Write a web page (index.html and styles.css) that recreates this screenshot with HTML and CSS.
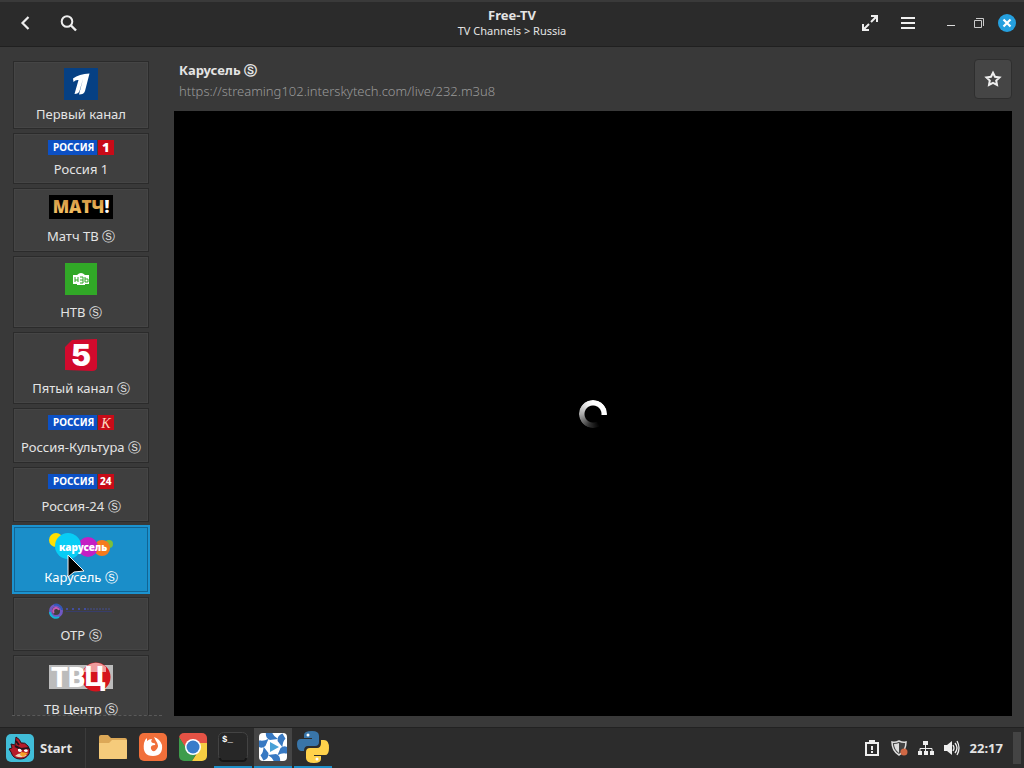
FILE: index.html
```html
<!DOCTYPE html>
<html lang="en">
<head>
<meta charset="utf-8">
<meta name="viewport" content="width=device-width, initial-scale=1">
<title>Free-TV</title>
<link rel="stylesheet" href="styles.css">
</head>
<body>
<header class="titlebar">
  <div class="titlebar-side titlebar-start">
    <button class="icon-button" aria-label="Back"><svg width="20" height="20" viewBox="0 0 20 20"><path d="M13.500 4 7.500 10l6 6" fill="none" stroke="#eee" stroke-width="2.2"/></svg></button>
    <button class="icon-button" aria-label="Search"><svg width="20" height="20" viewBox="0 0 20 20"><circle cx="9" cy="8.500" r="5.300" fill="none" stroke="#eee" stroke-width="2"/><path d="m13 12.500 5 5" stroke="#eee" stroke-width="2.400"/></svg></button>
  </div>
  <div class="titles">
    <h1 class="title">Free-TV</h1>
    <p class="subtitle">TV Channels &gt; Russia</p>
  </div>
  <div class="titlebar-side titlebar-end">
    <button class="icon-button" aria-label="Fullscreen"><svg width="20" height="20" viewBox="0 0 20 20"><path d="M11 3h6v6M9 17H3v-6M17 3l-6 6M3 17l6-6" fill="none" stroke="#eee" stroke-width="2"/><path d="M12 2h6v6zM2 12v6h6z" fill="#eee"/></svg></button>
    <button class="icon-button" aria-label="Menu"><svg width="20" height="20" viewBox="0 0 20 20"><path d="M3 5h14M3 10h14M3 15h14" stroke="#f0f0f0" stroke-width="2"/></svg></button>
    <div class="window-controls">
      <button class="window-button" aria-label="Minimize"><svg width="18" height="18" viewBox="0 0 18 18"><path d="M5 11.500h8" stroke="#ddd"/></svg></button>
      <button class="window-button" aria-label="Restore"><svg width="18" height="18" viewBox="0 0 18 18"><path d="M4.500 6.500h7v7h-7zM6 4.500h7.500V12" fill="none" stroke="#ccc"/></svg></button>
      <button class="window-button" aria-label="Close"><svg width="18" height="18" viewBox="0 0 18 18"><circle cx="9" cy="9" r="9" fill="#25a0df"/><path d="m5.500 5.500 7 7m0-7-7 7" stroke="#fff" stroke-width="2.200"/></svg></button>
    </div>
  </div>
</header>

<main class="content">
  <nav class="channels" aria-label="Channels">
    <button class="channel">
      <svg width="34" height="32" viewBox="0 0 34 32"><path fill="#064083" d="M0 0h34v32H0z"/><path d="M9 10.500Q15 6 25.500 5.500L21 23q-1 3.500-6 3.500L19 11l-3.500 12q-1 3-5 3L14.500 12q-3-.5-5 2z" fill="#fff"/></svg>
      <span class="label">Первый канал</span>
    </button>
    <button class="channel">
      <svg width="66" height="15" viewBox="0 0 66 15"><path fill="#0c50c4" d="M0 0h49v15H0z"/><path fill="#c80b18" d="M50 0h16v15H50z"/><text class="logo-text" x="5" y="11">РОССИЯ</text><text class="logo-digit" x="54" y="12">1</text></svg>
      <span class="label">Россия 1</span>
    </button>
    <button class="channel">
      <svg width="64" height="24" viewBox="0 0 64 24"><defs><linearGradient id="gold" x2="0" y2="1"><stop stop-color="#c98b38"/><stop offset="1" stop-color="#ffce70"/></linearGradient></defs><path d="M0 0h64v24H0z"/><text class="logo-match" x="32" y="18">МАТЧ<tspan fill="#fff">!</tspan></text></svg>
      <span class="label label-tall">Матч ТВ Ⓢ</span>
    </button>
    <button class="channel">
      <svg width="32" height="32" viewBox="0 0 32 32"><path fill="#31a827" d="M0 0h32v32H0z"/><path d="M8 12h4q4-4 8 0h4v9h-4v1h-8v-1H8z" fill="#fff"/><path d="M10 14v5m3-5v5m-3-2h3m2-3h3v6h-3m0-3h3m2-3v5h3v-3h-3" fill="none" stroke="#31a827"/></svg>
      <span class="label label-tall">НТВ Ⓢ</span>
    </button>
    <button class="channel">
      <svg width="32" height="32" viewBox="0 0 32 32"><path fill="#d20a2d" d="M7 1 32 0v28q0 4-5 4L0 31V8z"/><text class="logo-five" x="16" y="27">5</text></svg>
      <span class="label label-tall">Пятый канал Ⓢ</span>
    </button>
    <button class="channel">
      <svg width="66" height="15" viewBox="0 0 66 15"><path fill="#0c50c4" d="M0 0h49v15H0z"/><path fill="#c80b18" d="M50 0h16v15H50z"/><text class="logo-text" x="5" y="11">РОССИЯ</text><text class="logo-script" x="58" y="13">К</text></svg>
      <span class="label label-tall">Россия-Культура Ⓢ</span>
    </button>
    <button class="channel">
      <svg width="66" height="15" viewBox="0 0 66 15"><path fill="#0c50c4" d="M0 0h49v15H0z"/><path fill="#c80b18" d="M50 0h16v15H50z"/><text class="logo-text" x="5" y="11">РОССИЯ</text><text class="logo-small" x="52" y="11">24</text></svg>
      <span class="label label-tall">Россия-24 Ⓢ</span>
    </button>
    <button class="channel channel-selected" aria-current="true">
      <svg width="66" height="27" viewBox="0 0 66 27"><circle cx="8" cy="7" r="7" fill="#ffe000"/><circle cx="61" cy="11" r="4" fill="#7bbf3b"/><circle cx="54" cy="15" r="8" fill="#f57a1d"/><circle cx="40" cy="14" r="10" fill="#c41fc4"/><circle cx="20" cy="13" r="13" fill="#08cdf5"/><text class="logo-carousel" x="11" y="18">карусель</text></svg>
      <span class="label label-tall">Карусель Ⓢ</span>
      <svg class="cursor" width="20" height="28" viewBox="0 0 20 28"><path d="M2 2v22l6-5 10-1z" fill="#000" stroke="#f3f3f3"/></svg>
    </button>
    <button class="channel">
      <svg width="64" height="14" viewBox="0 0 64 14"><circle cx="7" cy="7" r="5.500" fill="none" stroke="#7059c4" stroke-width="3"/><path d="M1 8a6 6 0 0 0 9 5" fill="none" stroke="#12b5d6" stroke-width="2"/><path d="M5 1a6 6 0 0 1 8 5" fill="none" stroke="#3158b8" stroke-width="2"/><path d="M5 9a3 3 0 1 1 5-3" fill="none" stroke="#c35bb5" stroke-width="2"/><path d="M17 5h22" stroke="#414da0" stroke-width="2" stroke-dasharray="2 4"/><path d="M38 5h24" stroke="#454f91" stroke-dasharray="2 1"/><path d="M17 7.500h46" stroke="#383d6b"/></svg>
      <span class="label label-tall">ОТР Ⓢ</span>
    </button>
    <button class="channel">
      <svg width="64" height="30" viewBox="0 0 64 30"><path fill="#bcbcbc" d="M0 3h64v24H0z"/><circle cx="47" cy="15" r="14.500" fill="#d5141d"/><path d="M36 6a14 14 0 0 1 21-1v5H34z" fill="#ef9b9c"/><text class="logo-center" x="2" y="25">ТВ</text><text class="logo-center" x="36" y="24">Ц</text></svg>
      <span class="label label-tall">ТВ Центр Ⓢ</span>
    </button>
  </nav>

  <section class="player">
    <div class="player-head">
      <div>
        <h2 class="channel-name">Карусель Ⓢ</h2>
        <p class="channel-url">https://streaming102.interskytech.com/live/232.m3u8</p>
      </div>
      <button class="favorite" aria-label="Add to favorites"><svg width="18" height="18" viewBox="0 0 18 18"><path d="m9 2.800 2 4 4.500.6-3.300 3.100.8 4.500L9 12.900 5 15l.8-4.500-3.300-3.100L7 6.800z" fill="none" stroke="#eee" stroke-width="2"/></svg></button>
    </div>
    <div class="video"><div class="spinner" role="status" aria-label="Loading"></div></div>
  </section>
</main>

<footer class="taskbar">
  <button class="start">
    <svg width="28" height="28" viewBox="0 0 28 28"><rect width="28" height="28" rx="5" fill="#41bdd8"/><path d="M10 3q4 2 5 6 4-1 7 3 3 4 1 8-3 5-9 5-7 0-9-7l-2-3 3-1-1-4 4 1z" fill="#b51c2b" stroke="#301018"/><path d="m9 12 6 3 8-1M10 7l3 4" fill="none" stroke="#27131c" stroke-width="2"/><path d="M9 22q5-5 12-1-4 4-12 1" fill="#ead7bb"/><path d="M12 15q3-1 4 2-2 2-4 0zm6 1q3-2 4 1-2 2-4 0z" fill="#fff"/><path d="m15 18 7 1-5 4-3-2z" fill="#f5a127"/></svg>
    Start
  </button>
  <div class="tasks">
    <button class="task" aria-label="Files"><svg width="28" height="28" viewBox="0 0 28 28"><path d="M0 4q0-2 2-2h7l3 3h14q2 0 2 2v19H0z" fill="#dca857"/><path d="M0 10h10l3-3h15v17q0 2-2 2H2q-2 0-2-2z" fill="#f5cb7b"/></svg></button>
    <button class="task" aria-label="Firefox"><svg width="28" height="28" viewBox="0 0 28 28"><rect width="28" height="28" rx="5" fill="#f16f3a"/><path d="M5 10q1-4 3-5v3q2-2 5-2-2 3 1 4 3 0 2 2-5 0-4 4 2 4 5 1 4-4 0-9l-2-4q6 2 8 8 1 11-9 11Q3 23 5 10z" fill="#fff"/></svg></button>
    <button class="task" aria-label="Chrome"><svg width="28" height="28" viewBox="0 0 28 28"><clipPath id="tile"><rect width="28" height="28" rx="5"/></clipPath><g clip-path="url(#tile)"><path fill="#e55245" d="M0 0h28v10H14L8 18 0 4z"/><path fill="#3d9c4b" d="m0 4 9 14 8 3-4 7H0z"/><path fill="#f6ce42" d="M14 10h14v18H13l7-11z"/><circle cx="14" cy="14" r="8" fill="#fff"/><circle cx="14" cy="14" r="6.500" fill="#397cca"/></g></svg></button>
    <button class="task task-running" aria-label="Terminal"><svg width="30" height="30" viewBox="0 0 30 30"><rect x=".5" y=".5" width="29" height="28" rx="5" fill="#272727" stroke="#434343"/><path d="M2 26q0 3 4 3h18q4 0 4-3" fill="none" stroke="#151515" stroke-width="2"/><text class="prompt" x="4" y="10">$_</text></svg></button>
    <button class="task task-running task-active" aria-label="Hypnotix"><svg width="28" height="28" viewBox="0 0 28 28"><clipPath id="disc"><rect width="28" height="28" rx="4"/></clipPath><rect width="28" height="28" rx="4" fill="#fff"/><g fill="#3879c2" clip-path="url(#disc)"><path id="vane" d="M7-1h6q1 4 6 7l-8 1Q6 5 7-1"/><use href="#vane" transform="rotate(60 14 14)"/><use href="#vane" transform="rotate(120 14 14)"/><use href="#vane" transform="rotate(180 14 14)"/><use href="#vane" transform="rotate(240 14 14)"/><use href="#vane" transform="rotate(300 14 14)"/></g><path d="m11 9 9 5-9 5z" fill="#48a1d7"/></svg></button>
    <button class="task task-running" aria-label="Python"><svg width="32" height="32" viewBox="0 0 32 32"><path d="M15 0q7 0 7 5v6q0 4-4 4h-7q-4 0-4 5H4q-4-1-4-7 0-5 4-5h11V7H7V4q0-4 8-4z" fill="#3975a8"/><path d="M17 32q-8 0-8-5v-6q0-4 4-4h7q4 0 4-5V9h3q5 0 5 8t-5 7H17v1h7v3q0 4-7 4z" fill="#ffd24b"/><circle cx="11" cy="4" r="1.500" fill="#fff"/><circle cx="20" cy="28" r="1.500" fill="#fff"/></svg></button>
  </div>
  <div class="tray">
    <svg width="16" height="16" viewBox="0 0 16 16"><path d="M2 3h12v12H2z" fill="none" stroke="#eee" stroke-width="2"/><path d="M5 0h6v4H5zM7 6h2v4H7zm0 5h2v2H7z" fill="#eee"/></svg>
    <svg width="18" height="16" viewBox="0 0 18 16"><path d="M9 1q4 2 7 1 0 9-7 13Q2 11 2 2q3 1 7-1z" fill="#444" stroke="#ddd" stroke-width="1.500"/><path d="M9 3v10Q4 9 4 4q3 0 5-1z" fill="#ddd"/><circle cx="14" cy="12" r="3.500" fill="#cf6845"/></svg>
    <svg width="16" height="16" viewBox="0 0 16 16"><path d="M5 1h5v4H5zM0 11h4v4H0zm6 0h4v4H6zm6 0h4v4h-4zM7 5h1v7H7z" fill="#eee"/><path d="M2 12V8.500h12V12" fill="none" stroke="#eee"/></svg>
    <svg width="16" height="16" viewBox="0 0 16 16"><path d="M0 5h3l5-4v14l-5-4H0z" fill="#eee"/><path d="M9 5q2 3 0 6m2-8q4 5 0 10m2-12q4 7 0 14" fill="none" stroke="#eee" stroke-width="1.300"/></svg>
    <time class="clock">22:17</time>
    <button class="show-desktop" aria-label="Show desktop"></button>
  </div>
</footer>
</body>
</html>
```
FILE: styles.css
```css
* { box-sizing: border-box; }
body {
  margin: 0;
  height: 100vh;
  display: flex;
  flex-direction: column;
  overflow: hidden;
  background: #393939;
  color: #e4e4e4;
  font: 13px/20px "Noto Sans", "DejaVu Sans", sans-serif;
}
button {
  margin: 0;
  padding: 0;
  border: 0;
  background: none;
  color: inherit;
  font: inherit;
}
svg { display: block; flex: none; overflow: visible; }
h1, h2, p { margin: 0; }

.titlebar {
  flex: none;
  display: grid;
  grid-template-columns: 1fr auto 1fr;
  align-items: center;
  height: 47px;
  padding: 0 8px 2px;
  background: #2b2b2b;
  border-top: 2px solid #3a3a3a;
  border-bottom: 1px solid #202020;
}
.titlebar-side { display: flex; align-items: center; gap: 23px; }
.titlebar-start { padding-left: 7px; }
.titlebar-end { justify-content: flex-end; gap: 18px; }
.window-controls { display: flex; gap: 10px; margin-left: 6px; }
.titles { text-align: center; }
.title { font-size: 13px; line-height: 15px; }
.subtitle { font-size: 11px; line-height: 15px; }

.content { flex: 1; display: flex; min-height: 0; padding: 14px 12px 11px; }
.channels {
  flex: none;
  width: 150px;
  margin-right: 12px;
  padding-right: 13px;
  display: flex;
  flex-direction: column;
  gap: 4px;
  overflow: hidden;
  border-bottom: 1px dashed #595959;
}
.channel {
  flex: none;
  position: relative;
  display: flex;
  flex-direction: column;
  align-items: center;
  margin-left: 1px;
  padding-top: 6px;
  background: #3f3f3f;
  border: 1px solid #2b2b2b;
  box-shadow: inset 0 0 0 1px #454545;
}
.channel-selected {
  background: #1a8ec9;
  border-color: #146491;
  color: #fff;
  outline: 2px solid #1b93d0;
  outline-offset: -1px;
  box-shadow: inset 0 0 0 1px #126493;
}
.label { line-height: 28px; white-space: nowrap; }
.label-tall { padding-top: 2px; line-height: 30px; }
.cursor { position: absolute; left: 52px; top: 26px; }

.logo-text { font: bold 10px "Noto Sans", sans-serif; fill: #fff; }
.logo-digit { font: 900 13px "Noto Sans", sans-serif; fill: #fff; }
.logo-small { font: 800 10px "Noto Sans", sans-serif; fill: #fff; }
.logo-script { font: italic 14px "Liberation Serif", serif; fill: #ffd9c0; text-anchor: middle; }
.logo-match { font: 900 17px "Open Sans", sans-serif; fill: url(#gold); text-anchor: middle; }
.logo-five { font: 900 30px Inter, sans-serif; fill: #fff; text-anchor: middle; }
.logo-center { font: 900 27px Roboto, sans-serif; fill: #fff; }
.logo-carousel { font: 900 10px "Noto Sans", sans-serif; fill: #fff; }
.prompt { font: bold 9px "Liberation Mono", monospace; fill: #fff; }

.player { flex: 1; min-width: 0; display: flex; flex-direction: column; }
.player-head {
  display: flex;
  justify-content: space-between;
  align-items: flex-start;
  height: 50px;
  padding-left: 5px;
}
.channel-name { margin-top: -1px; font-size: 13px; line-height: 21px; }
.channel-url { font-size: 13px; font-weight: 300; color: #999; }
.favorite {
  display: grid;
  place-items: center;
  width: 38px;
  height: 40px;
  margin-top: -2px;
  background: #454545;
  border: 1px solid #2e2e2e;
  border-radius: 4px;
}
.video { flex: 1; display: grid; place-items: center; background: #000; }
.spinner {
  width: 28px;
  height: 28px;
  border-radius: 50%;
  background: conic-gradient(#fff 0 95deg, #000 96deg 150deg, #333 200deg, #aaa 270deg, #eee 330deg, #fff);
  mask: radial-gradient(circle, transparent 8px, #000 9px);
}

.taskbar {
  flex: none;
  display: flex;
  align-items: stretch;
  height: 41px;
  background: #2c2c2c;
  border-top: 1px solid #222;
}
.start {
  display: flex;
  align-items: center;
  gap: 6px;
  width: 86px;
  padding-left: 6px;
  border-right: 1px solid #3b3b3b;
  font-weight: bold;
}
.tasks { display: flex; gap: 2px; padding-left: 8px; }
.task { display: grid; place-items: center; width: 38px; border-bottom: 2px solid transparent; }
.task-running { border-bottom-color: #1d8fc9; }
.task-active { background: #454545; }
.tray { display: flex; align-items: center; gap: 10px; margin-left: auto; padding-right: 3px; }
.clock { font-weight: bold; }
.show-desktop { width: 8px; height: 32px; background: #444; }
```
